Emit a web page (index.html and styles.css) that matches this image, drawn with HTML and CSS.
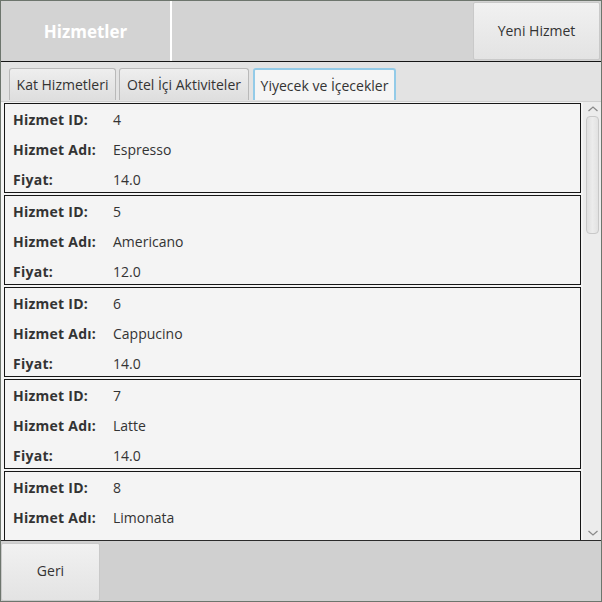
FILE: index.html
```html
<!DOCTYPE html>
<html lang="tr">
<head>
<meta charset="utf-8">
<title>Hizmetler</title>
<link rel="stylesheet" href="styles.css">
</head>
<body>
<div class="window">
  <header class="topbar">
    <div class="title">Hizmetler</div>
    <div class="sep"></div>
    <div class="spacer"></div>
    <button class="btn btn-new">Yeni Hizmet</button>
  </header>
  <nav class="tabs">
    <div class="tab t1">Kat Hizmetleri</div>
    <div class="tab t2">Otel İçi Aktiviteler</div>
    <div class="tab t3 active">Yiyecek ve İçecekler</div>
  </nav>
  <main class="content">
    <div class="list">
      <div class="card">
        <div class="row"><span class="lbl">Hizmet ID:</span><span class="val">4</span></div>
        <div class="row"><span class="lbl">Hizmet Adı:</span><span class="val">Espresso</span></div>
        <div class="row"><span class="lbl">Fiyat:</span><span class="val">14.0</span></div>
      </div>
      <div class="card">
        <div class="row"><span class="lbl">Hizmet ID:</span><span class="val">5</span></div>
        <div class="row"><span class="lbl">Hizmet Adı:</span><span class="val">Americano</span></div>
        <div class="row"><span class="lbl">Fiyat:</span><span class="val">12.0</span></div>
      </div>
      <div class="card">
        <div class="row"><span class="lbl">Hizmet ID:</span><span class="val">6</span></div>
        <div class="row"><span class="lbl">Hizmet Adı:</span><span class="val">Cappucino</span></div>
        <div class="row"><span class="lbl">Fiyat:</span><span class="val">14.0</span></div>
      </div>
      <div class="card">
        <div class="row"><span class="lbl">Hizmet ID:</span><span class="val">7</span></div>
        <div class="row"><span class="lbl">Hizmet Adı:</span><span class="val">Latte</span></div>
        <div class="row"><span class="lbl">Fiyat:</span><span class="val">14.0</span></div>
      </div>
      <div class="card">
        <div class="row"><span class="lbl">Hizmet ID:</span><span class="val">8</span></div>
        <div class="row"><span class="lbl">Hizmet Adı:</span><span class="val">Limonata</span></div>
      </div>
    </div>
    <div class="scrollbar">
      <svg class="arrow" width="12" height="8" viewBox="0 0 12 8"><path d="M1.5 6 L6 2 L10.5 6" fill="none" stroke="#8a8a8a" stroke-width="1.3"/></svg>
      <div class="track"><div class="thumb"></div></div>
      <svg class="arrow" width="12" height="8" viewBox="0 0 12 8"><path d="M1.5 2 L6 6 L10.5 2" fill="none" stroke="#8a8a8a" stroke-width="1.3"/></svg>
    </div>
  </main>
  <footer class="bottombar">
    <button class="btn btn-back">Geri</button>
  </footer>
</div>
</body>
</html>
```
FILE: styles.css
```css
* { box-sizing: border-box; }
html, body { margin: 0; padding: 0; }
body {
  font-family: "Open Sans", "Noto Sans", sans-serif;
  font-size: 14px;
  color: #333;
  background: #d3d3d3;
}
.window {
  width: 602px;
  height: 602px;
  border: 1px solid #6d756d;
  display: flex;
  flex-direction: column;
  overflow: hidden;
}
.topbar {
  height: 61px;
  flex: none;
  display: flex;
  background: #d3d3d3;
  border-bottom: 1px solid #151515;
}
.title {
  width: 169px;
  display: flex;
  align-items: center;
  justify-content: center;
  color: #fff;
  font-weight: 700;
  font-size: 17px;
  padding-top: 1px;
}
.sep {
  width: 2px;
  background: #fff;
}
.spacer { flex: 1; }
.btn {
  font-family: inherit;
  font-size: 14px;
  color: #333;
  border: 1px solid #c9c9c9;
  border-radius: 2px;
  background: linear-gradient(#f1f1f1, #e3e3e3);
  padding: 0;
  cursor: default;
}
.btn-new {
  width: 127px;
  margin: 1px 1px 0 0;
  height: 58px;
  padding-bottom: 2px;
}
.tabs {
  height: 40px;
  flex: none;
  display: flex;
  align-items: flex-end;
  gap: 3px;
  padding: 0 0 1px 8px;
  background: #e3e3e3;
  border-bottom: 1px solid #cfcfcf;
}
.tab {
  height: 32px;
  display: flex;
  align-items: center;
  justify-content: center;
  font-size: 14px;
  color: #333;
  border: 1px solid #b9b9b9;
  border-bottom: none;
  border-radius: 3px 3px 0 0;
  background: linear-gradient(#eeeeee, #dedede);
}
.t1 { width: 107px; }
.t2 { width: 130px; }
.t3 { width: 143px; margin-left: 1px; }
.tab.active {
  background: #f5f5f5;
  border: 2px solid #93cbe8;
  border-bottom: none;
}
.content {
  flex: 1;
  min-height: 0;
  display: flex;
  background: #f4f4f4;
  border-bottom: 1px solid #2a2a2a;
}
.list {
  flex: 1;
  overflow: hidden;
  padding: 1px 2px 0 3px;
  display: flex;
  flex-direction: column;
  gap: 2px;
}
.card {
  flex: none;
  height: 90px;
  border: 1.5px solid #161616;
  background: #f4f4f4;
  padding: 0 0 0 8px;
}
.row {
  height: 30px;
  display: flex;
  align-items: center;
}
.lbl {
  width: 100px;
  font-weight: 700;
  letter-spacing: 0.25px;
  color: #333;
}
.val { color: #333; }
.scrollbar {
  width: 18px;
  flex: none;
  display: flex;
  flex-direction: column;
  align-items: center;
  background: #ececec;
  padding: 2px 0 2px 1px;
}
.arrow { flex: none; margin: 1px 0; }
.track {
  flex: 1;
  width: 100%;
  padding: 2px 2px 0 2px;
}
.thumb {
  height: 118px;
  border: 1px solid #c8c8c8;
  border-radius: 4px;
  background: linear-gradient(90deg, #e0e0e0, #ececec 50%, #e2e2e2);
}
.bottombar {
  height: 60px;
  flex: none;
  background: #d0d0d0;
  padding: 2px 0 0 0;
}
.btn-back {
  width: 99px;
  height: 58px;
  margin: 0;
  padding-bottom: 3px;
}
```
